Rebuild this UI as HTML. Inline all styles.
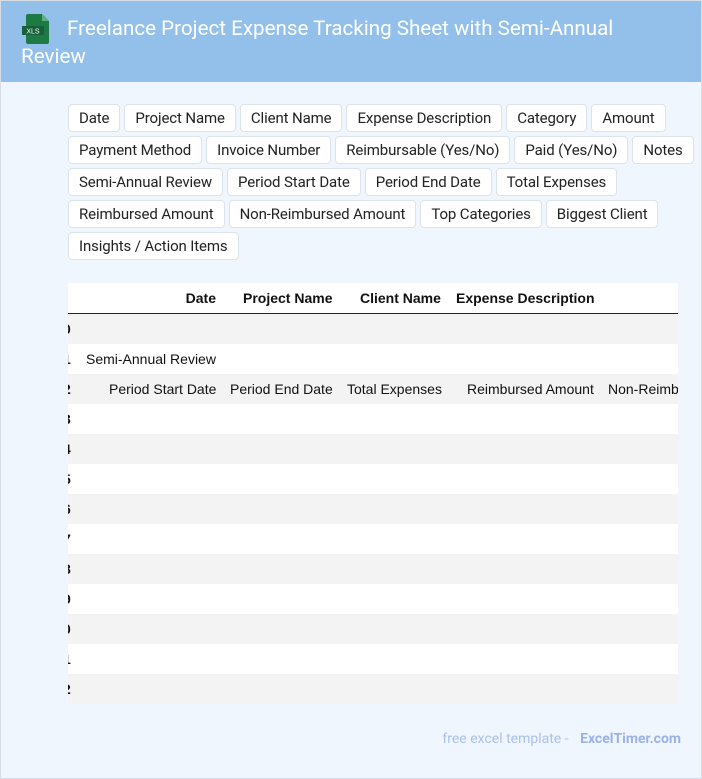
<!DOCTYPE html>
<html><head><meta charset="utf-8"><style>
*{margin:0;padding:0;box-sizing:border-box}
body{width:702px;height:779px;background:#f0f6fe;font-family:Roboto,"Liberation Sans",sans-serif;position:relative;overflow:hidden}
.frame{position:absolute;left:0;top:0;width:702px;height:779px;border:1px solid #d6dde6;pointer-events:none}
.hdr{position:absolute;left:0;top:0;width:702px;height:82px;background:#92c0ea;}
.hdr h1{position:absolute;left:21px;top:15px;width:610px;font-weight:normal;color:#fff;font-size:20.6px;line-height:28px;text-indent:46px}
.ico{position:absolute;left:22px;top:14px;width:28px;height:30px}
.btns{position:absolute;left:68px;top:104px;width:634px;display:flex;flex-wrap:wrap;gap:4px}
.b{height:28px;line-height:26px;padding:0 10px;border:1px solid #dde3ea;border-radius:4px;background:#fff;font-size:15px;color:#222;letter-spacing:-0.12px}
.tbl{position:absolute;left:68px;top:283px;width:610px;height:421px;overflow:hidden;background:#fff;font-family:"Liberation Sans",sans-serif;font-size:14px;color:#111}
.row{position:absolute;left:0;width:610px;height:30px}
.g{background:#f3f3f3}
.c{position:absolute;top:0;line-height:30px;white-space:nowrap}
.th{font-weight:bold}
.ft{position:absolute;right:21px;top:731px;font-size:14px;color:#aac0ec}
.ft b{color:#9ab2e8;margin-left:8px}
</style></head><body>
<div class="hdr"><svg class="ico" viewBox="0 0 28 30"><path d="M6 0h14l7 7v21a2 2 0 0 1-2 2H6a2 2 0 0 1-2-2V2a2 2 0 0 1 2-2z" fill="#1e7a45"/><path d="M20 0v7h7z" fill="#5fae7f"/><rect x="0" y="12" width="22" height="9" fill="#16613a"/><text x="11" y="19.5" font-size="7" fill="#fff" text-anchor="middle" font-family="Liberation Sans">XLS</text></svg><h1>Freelance Project Expense Tracking Sheet with Semi-Annual Review</h1></div>
<div class="btns">
<span class="b">Date</span><span class="b">Project Name</span><span class="b">Client Name</span><span class="b">Expense Description</span><span class="b">Category</span><span class="b">Amount</span>
<span class="b">Payment Method</span><span class="b">Invoice Number</span><span class="b">Reimbursable (Yes/No)</span><span class="b">Paid (Yes/No)</span><span class="b">Notes</span>
<span class="b">Semi-Annual Review</span><span class="b">Period Start Date</span><span class="b">Period End Date</span><span class="b">Total Expenses</span>
<span class="b">Reimbursed Amount</span><span class="b">Non-Reimbursed Amount</span><span class="b">Top Categories</span><span class="b">Biggest Client</span>
<span class="b">Insights / Action Items</span>
</div>
<div class="tbl">
<div class="row th" style="top:0;border-bottom:1px solid #222;height:31px">
<span class="c" style="right:462px">Date</span><span class="c" style="left:175px">Project Name</span><span class="c" style="left:292px">Client Name</span><span class="c" style="left:388px">Expense Description</span></div>
<div class="row g" style="top:31px"><span class="c th" style="left:-5px">0</span></div>
<div class="row" style="top:61px"><span class="c th" style="left:-5px">1</span><span class="c" style="left:18px">Semi-Annual Review</span></div>
<div class="row g" style="top:91px"><span class="c th" style="left:-5px">2</span><span class="c" style="left:41px">Period Start Date</span><span class="c" style="left:162px">Period End Date</span><span class="c" style="left:279px">Total Expenses</span><span class="c" style="left:399px">Reimbursed Amount</span><span class="c" style="left:540px">Non-Reimbursed Amount</span></div>
<div class="row" style="top:121px"><span class="c th" style="left:-5px">3</span></div>
<div class="row g" style="top:151px"><span class="c th" style="left:-5px">4</span></div>
<div class="row" style="top:181px"><span class="c th" style="left:-5px">5</span></div>
<div class="row g" style="top:211px"><span class="c th" style="left:-5px">6</span></div>
<div class="row" style="top:241px"><span class="c th" style="left:-5px">7</span></div>
<div class="row g" style="top:271px"><span class="c th" style="left:-5px">8</span></div>
<div class="row" style="top:301px"><span class="c th" style="left:-5px">9</span></div>
<div class="row g" style="top:331px"><span class="c th" style="left:-5px">0</span></div>
<div class="row" style="top:361px"><span class="c th" style="left:-5px">1</span></div>
<div class="row g" style="top:391px"><span class="c th" style="left:-5px">2</span></div>
</div>
<div class="ft">free excel template - <b>ExcelTimer.com</b></div>
<div class="frame"></div>
</body></html>
